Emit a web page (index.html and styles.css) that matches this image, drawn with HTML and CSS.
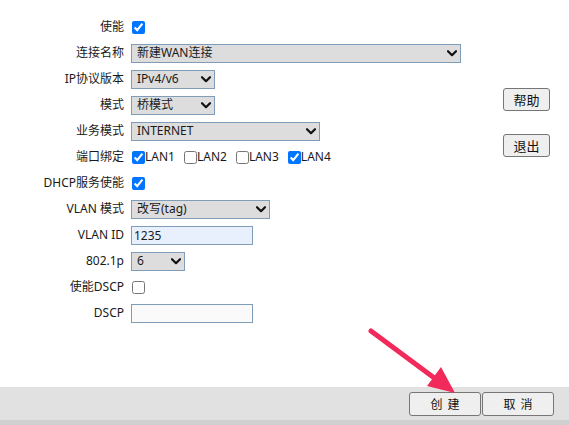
FILE: index.html
```html
<!DOCTYPE html>
<html lang="zh">
<head>
<meta charset="utf-8">
<title>WAN</title>
<link rel="stylesheet" href="styles.css">
</head>
<body>
<div class="page">
  <div class="main">
    <div class="form">
      <div class="lbl">使能</div>
      <div class="ctl"><input type="checkbox" class="cb" checked></div>

      <div class="lbl">连接名称</div>
      <div class="sel w330"><span>新建WAN连接</span><svg class="chev" viewBox="0 0 10 7" width="10" height="7"><polyline points="1,1.2 5,5.2 9,1.2"/></svg></div>

      <div class="lbl">IP协议版本</div>
      <div class="sel w84"><span>IPv4/v6</span><svg class="chev" viewBox="0 0 10 7" width="10" height="7"><polyline points="1,1.2 5,5.2 9,1.2"/></svg></div>

      <div class="lbl">模式</div>
      <div class="sel w84"><span>桥模式</span><svg class="chev" viewBox="0 0 10 7" width="10" height="7"><polyline points="1,1.2 5,5.2 9,1.2"/></svg></div>

      <div class="lbl">业务模式</div>
      <div class="sel w189"><span>INTERNET</span><svg class="chev" viewBox="0 0 10 7" width="10" height="7"><polyline points="1,1.2 5,5.2 9,1.2"/></svg></div>

      <div class="lbl">端口绑定</div>
      <div class="ports">
        <label class="port"><input type="checkbox" class="cb" checked>LAN1</label>
        <label class="port"><input type="checkbox" class="cb">LAN2</label>
        <label class="port"><input type="checkbox" class="cb">LAN3</label>
        <label class="port"><input type="checkbox" class="cb" checked>LAN4</label>
      </div>

      <div class="lbl">DHCP服务使能</div>
      <div class="ctl"><input type="checkbox" class="cb" checked></div>

      <div class="lbl">VLAN 模式</div>
      <div class="sel w139"><span>改写(tag)</span><svg class="chev" viewBox="0 0 10 7" width="10" height="7"><polyline points="1,1.2 5,5.2 9,1.2"/></svg></div>

      <div class="lbl">VLAN ID</div>
      <input class="inp filled" type="text" value="1235">

      <div class="lbl">802.1p</div>
      <div class="sel w54"><span>6</span><svg class="chev" viewBox="0 0 10 7" width="10" height="7"><polyline points="1,1.2 5,5.2 9,1.2"/></svg></div>

      <div class="lbl">使能DSCP</div>
      <div class="ctl"><input type="checkbox" class="cb"></div>

      <div class="lbl">DSCP</div>
      <input class="inp" type="text" value="">
    </div>
    <div class="side">
      <button class="btn side-btn">帮助</button>
      <button class="btn side-btn">退出</button>
    </div>
  </div>
  <div class="bar">
    <button class="btn bar-btn">创建</button>
    <button class="btn bar-btn">取消</button>
  </div>
  <svg class="arrow" width="569" height="425" viewBox="0 0 569 425">
    <line x1="371" y1="331" x2="437" y2="380" stroke="#f2295b" stroke-width="5" stroke-linecap="round"/>
    <polygon points="455,393 427,386 441,367" fill="#f2295b"/>
  </svg>
</div>
</body>
</html>
```

FILE: styles.css
```css
html, body {
  margin: 0;
  padding: 0;
  background: #ffffff;
}
body {
  font-family: "Noto Sans", "Noto Sans CJK SC", sans-serif;
  font-size: 12px;
  color: #1a1a1a;
}
.page {
  position: relative;
  width: 569px;
  height: 425px;
  overflow: hidden;
}
.main {
  display: flex;
  justify-content: space-between;
  height: 387px;
}
.form {
  display: grid;
  grid-template-columns: 124px auto;
  column-gap: 7px;
  grid-auto-rows: 26px;
  align-items: center;
  padding-top: 14px;
  align-content: start;
}
.lbl {
  text-align: right;
  white-space: nowrap;
  line-height: 16px;
}
.ctl {
  display: flex;
  align-items: center;
}
.cb {
  width: 13px;
  height: 13px;
  margin: 0 0 0 1px;
}
.sel {
  justify-self: start;
  box-sizing: border-box;
  height: 19px;
  display: flex;
  align-items: center;
  justify-content: space-between;
  border: 1px solid #7f9db9;
  background: #dddddd;
  padding: 0 3px 0 5px;
  line-height: 16px;
}
.chev polyline {
  fill: none;
  stroke: #111111;
  stroke-width: 2.2;
  stroke-linecap: round;
  stroke-linejoin: round;
}
.w330 { width: 330px; }
.w84 { width: 84px; }
.w189 { width: 189px; }
.w139 { width: 139px; }
.w54 { width: 54px; }
.ports {
  display: flex;
  align-items: center;
  gap: 8px;
}
.port {
  display: flex;
  align-items: center;
  line-height: 16px;
}
.inp {
  justify-self: start;
  box-sizing: border-box;
  width: 122px;
  height: 19px;
  margin: 0;
  border: 1px solid #7f9db9;
  background: #fafafa;
  padding: 0 2px;
  font-family: "Noto Sans", "Noto Sans CJK SC", sans-serif;
  font-size: 12px;
  color: #1a1a1a;
  outline: none;
}
.inp.filled {
  background: #e8f0fe;
}
.side {
  display: flex;
  flex-direction: column;
  gap: 23px;
  padding-top: 88px;
  margin-right: 19px;
}
.btn {
  box-sizing: border-box;
  border: 1px solid #767676;
  border-radius: 3px;
  background: #efefef;
  font-family: "Noto Sans CJK SC", sans-serif;
  color: #111111;
  padding: 0;
  margin: 0;
}
.side-btn {
  width: 47px;
  height: 23px;
  font-size: 13px;
  line-height: 20px;
}
.bar {
  box-sizing: border-box;
  height: 38px;
  background: #e1e1e1;
  border-bottom: 5px solid #d0d0d0;
  display: flex;
  justify-content: flex-end;
  align-items: flex-start;
  gap: 1px;
  padding: 5px 15px 0 0;
}
.bar-btn {
  width: 72px;
  height: 24px;
  font-size: 12px;
  letter-spacing: 5px;
  padding-left: 5px;
  line-height: 20px;
}
.arrow {
  position: absolute;
  left: 0;
  top: 0;
  pointer-events: none;
}
```
